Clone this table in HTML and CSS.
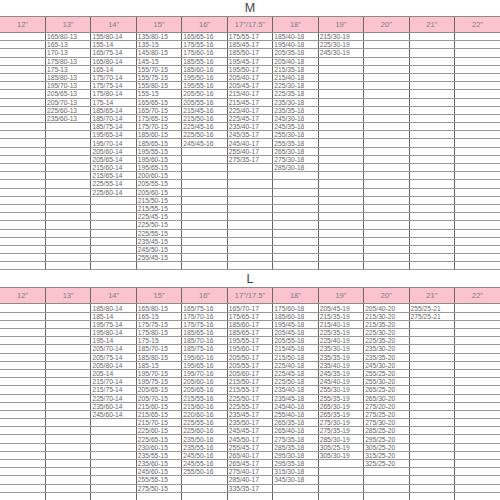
FILE: index.html
```html
<!DOCTYPE html>
<html lang="en">
<head>
<meta charset="utf-8">
<title>Tire sizes</title>
<link rel="stylesheet" href="styles.css">
</head>
<body>
<div class="sheet">
<section class="group">
<div class="title">M</div>
<table class="sizes">
<thead><tr><th>12"</th><th>13"</th><th>14"</th><th>15"</th><th>16"</th><th>17"/17.5"</th><th>18"</th><th>19"</th><th>20"</th><th>21"</th><th>22"</th></tr></thead>
<tbody>
<tr><td></td><td>165/80-13</td><td>155/80-14</td><td>135/80-15</td><td>165/65-16</td><td>175/55-17</td><td>185/40-18</td><td>215/30-19</td><td></td><td></td><td></td></tr>
<tr><td></td><td>165-13</td><td>155-14</td><td>135-15</td><td>175/55-16</td><td>185/45-17</td><td>195/40-18</td><td>225/30-19</td><td></td><td></td><td></td></tr>
<tr><td></td><td>170-13</td><td>165/75-14</td><td>145/80-15</td><td>175/60-16</td><td>185/50-17</td><td>205/35-18</td><td>245/30-19</td><td></td><td></td><td></td></tr>
<tr><td></td><td>175/80-13</td><td>165/80-14</td><td>145-15</td><td>185/55-16</td><td>195/45-17</td><td>205/40-18</td><td></td><td></td><td></td><td></td></tr>
<tr><td></td><td>175-13</td><td>165-14</td><td>155/70-15</td><td>185/60-16</td><td>195/50-17</td><td>215/35-18</td><td></td><td></td><td></td><td></td></tr>
<tr><td></td><td>185/80-13</td><td>175/70-14</td><td>155/75-15</td><td>195/50-16</td><td>205/40-17</td><td>215/40-18</td><td></td><td></td><td></td><td></td></tr>
<tr><td></td><td>195/70-13</td><td>175/75-14</td><td>155/80-15</td><td>195/55-16</td><td>205/45-17</td><td>225/30-18</td><td></td><td></td><td></td><td></td></tr>
<tr><td></td><td>205/65-13</td><td>175/80-14</td><td>155-15</td><td>205/50-16</td><td>215/40-17</td><td>225/35-18</td><td></td><td></td><td></td><td></td></tr>
<tr><td></td><td>205/70-13</td><td>175-14</td><td>165/65-15</td><td>205/55-16</td><td>215/45-17</td><td>235/30-18</td><td></td><td></td><td></td><td></td></tr>
<tr><td></td><td>225/60-13</td><td>185/65-14</td><td>165/70-15</td><td>215/45-16</td><td>225/40-17</td><td>235/35-18</td><td></td><td></td><td></td><td></td></tr>
<tr><td></td><td>235/60-13</td><td>185/70-14</td><td>175/65-15</td><td>215/50-16</td><td>225/45-17</td><td>245/30-18</td><td></td><td></td><td></td><td></td></tr>
<tr><td></td><td></td><td>185/75-14</td><td>175/70-15</td><td>225/45-16</td><td>235/40-17</td><td>245/35-18</td><td></td><td></td><td></td><td></td></tr>
<tr><td></td><td></td><td>195/65-14</td><td>185/60-15</td><td>225/50-16</td><td>245/35-17</td><td>255/30-18</td><td></td><td></td><td></td><td></td></tr>
<tr><td></td><td></td><td>195/70-14</td><td>185/65-15</td><td>245/45-16</td><td>245/40-17</td><td>255/35-18</td><td></td><td></td><td></td><td></td></tr>
<tr><td></td><td></td><td>205/60-14</td><td>195/55-15</td><td></td><td>255/40-17</td><td>265/30-18</td><td></td><td></td><td></td><td></td></tr>
<tr><td></td><td></td><td>205/65-14</td><td>195/60-15</td><td></td><td>275/35-17</td><td>275/30-18</td><td></td><td></td><td></td><td></td></tr>
<tr><td></td><td></td><td>215/60-14</td><td>195/65-15</td><td></td><td></td><td>285/30-18</td><td></td><td></td><td></td><td></td></tr>
<tr><td></td><td></td><td>215/65-14</td><td>200/60-15</td><td></td><td></td><td></td><td></td><td></td><td></td><td></td></tr>
<tr><td></td><td></td><td>225/55-14</td><td>205/55-15</td><td></td><td></td><td></td><td></td><td></td><td></td><td></td></tr>
<tr><td></td><td></td><td>225/60-14</td><td>205/60-15</td><td></td><td></td><td></td><td></td><td></td><td></td><td></td></tr>
<tr><td></td><td></td><td></td><td>215/50-15</td><td></td><td></td><td></td><td></td><td></td><td></td><td></td></tr>
<tr><td></td><td></td><td></td><td>215/55-15</td><td></td><td></td><td></td><td></td><td></td><td></td><td></td></tr>
<tr><td></td><td></td><td></td><td>225/45-15</td><td></td><td></td><td></td><td></td><td></td><td></td><td></td></tr>
<tr><td></td><td></td><td></td><td>225/50-15</td><td></td><td></td><td></td><td></td><td></td><td></td><td></td></tr>
<tr><td></td><td></td><td></td><td>225/55-15</td><td></td><td></td><td></td><td></td><td></td><td></td><td></td></tr>
<tr><td></td><td></td><td></td><td>235/45-15</td><td></td><td></td><td></td><td></td><td></td><td></td><td></td></tr>
<tr><td></td><td></td><td></td><td>245/50-15</td><td></td><td></td><td></td><td></td><td></td><td></td><td></td></tr>
<tr><td></td><td></td><td></td><td>255/45-15</td><td></td><td></td><td></td><td></td><td></td><td></td><td></td></tr>
<tr><td></td><td></td><td></td><td></td><td></td><td></td><td></td><td></td><td></td><td></td><td></td></tr>
</tbody>
</table>
</section>
<section class="group">
<div class="title">L</div>
<table class="sizes">
<thead><tr><th>12"</th><th>13"</th><th>14"</th><th>15"</th><th>16"</th><th>17"/17.5"</th><th>18"</th><th>19"</th><th>20"</th><th>21"</th><th>22"</th></tr></thead>
<tbody>
<tr><td></td><td></td><td>185/80-14</td><td>165/80-15</td><td>165/75-16</td><td>165/70-17</td><td>175/60-18</td><td>205/45-19</td><td>205/40-20</td><td>255/25-21</td><td></td></tr>
<tr><td></td><td></td><td>185-14</td><td>165-15</td><td>175/70-16</td><td>175/65-17</td><td>185/60-18</td><td>215/35-19</td><td>215/30-20</td><td>275/25-21</td><td></td></tr>
<tr><td></td><td></td><td>195/75-14</td><td>175/75-15</td><td>175/75-16</td><td>185/60-17</td><td>195/45-18</td><td>215/40-19</td><td>215/35-20</td><td></td><td></td></tr>
<tr><td></td><td></td><td>195/80-14</td><td>175/80-15</td><td>185/65-16</td><td>185/65-17</td><td>205/45-18</td><td>225/35-19</td><td>225/30-20</td><td></td><td></td></tr>
<tr><td></td><td></td><td>195-14</td><td>175-15</td><td>185/70-16</td><td>195/55-17</td><td>205/55-18</td><td>225/40-19</td><td>225/35-20</td><td></td><td></td></tr>
<tr><td></td><td></td><td>205/70-14</td><td>185/70-15</td><td>185/75-16</td><td>195/60-17</td><td>215/45-18</td><td>235/30-19</td><td>235/30-20</td><td></td><td></td></tr>
<tr><td></td><td></td><td>205/75-14</td><td>185/80-15</td><td>195/60-16</td><td>205/50-17</td><td>215/50-18</td><td>235/35-19</td><td>235/35-20</td><td></td><td></td></tr>
<tr><td></td><td></td><td>205/80-14</td><td>185-15</td><td>195/65-16</td><td>205/55-17</td><td>225/40-18</td><td>235/40-19</td><td>245/30-20</td><td></td><td></td></tr>
<tr><td></td><td></td><td>205-14</td><td>195/70-15</td><td>195/70-16</td><td>205/60-17</td><td>225/45-18</td><td>245/35-19</td><td>255/25-20</td><td></td><td></td></tr>
<tr><td></td><td></td><td>215/70-14</td><td>195/75-15</td><td>205/60-16</td><td>215/50-17</td><td>225/50-18</td><td>245/40-19</td><td>255/30-20</td><td></td><td></td></tr>
<tr><td></td><td></td><td>215/75-14</td><td>205/65-15</td><td>205/65-16</td><td>215/55-17</td><td>235/40-18</td><td>255/30-19</td><td>265/25-20</td><td></td><td></td></tr>
<tr><td></td><td></td><td>225/70-14</td><td>205/70-15</td><td>215/55-16</td><td>225/50-17</td><td>235/45-18</td><td>255/35-19</td><td>265/30-20</td><td></td><td></td></tr>
<tr><td></td><td></td><td>235/60-14</td><td>215/60-15</td><td>215/60-16</td><td>225/55-17</td><td>245/40-18</td><td>265/30-19</td><td>275/20-20</td><td></td><td></td></tr>
<tr><td></td><td></td><td>245/60-14</td><td>215/65-15</td><td>220/60-16</td><td>235/45-17</td><td>255/40-18</td><td>265/35-19</td><td>275/25-20</td><td></td><td></td></tr>
<tr><td></td><td></td><td></td><td>215/70-15</td><td>225/55-16</td><td>235/50-17</td><td>265/35-18</td><td>275/30-19</td><td>275/30-20</td><td></td><td></td></tr>
<tr><td></td><td></td><td></td><td>225/60-15</td><td>225/60-16</td><td>245/45-17</td><td>265/40-18</td><td>275/35-19</td><td>285/25-20</td><td></td><td></td></tr>
<tr><td></td><td></td><td></td><td>225/65-15</td><td>235/50-16</td><td>245/50-17</td><td>275/35-18</td><td>285/30-19</td><td>295/25-20</td><td></td><td></td></tr>
<tr><td></td><td></td><td></td><td>230/60-15</td><td>235/55-16</td><td>255/45-17</td><td>285/35-18</td><td>305/25-19</td><td>305/25-20</td><td></td><td></td></tr>
<tr><td></td><td></td><td></td><td>235/55-15</td><td>245/50-16</td><td>265/40-17</td><td>295/30-18</td><td>305/30-19</td><td>315/25-20</td><td></td><td></td></tr>
<tr><td></td><td></td><td></td><td>235/60-15</td><td>245/55-16</td><td>265/45-17</td><td>295/35-18</td><td></td><td>325/25-20</td><td></td><td></td></tr>
<tr><td></td><td></td><td></td><td>245/60-15</td><td>255/50-16</td><td>275/40-17</td><td>315/30-18</td><td></td><td></td><td></td><td></td></tr>
<tr><td></td><td></td><td></td><td>255/55-15</td><td></td><td>285/40-17</td><td>345/30-18</td><td></td><td></td><td></td><td></td></tr>
<tr><td></td><td></td><td></td><td>275/50-15</td><td></td><td>335/35-17</td><td></td><td></td><td></td><td></td><td></td></tr>
<tr><td></td><td></td><td></td><td></td><td></td><td></td><td></td><td></td><td></td><td></td><td></td></tr>
</tbody>
</table>
</section>
</div>
</body>
</html>
```
FILE: styles.css
```css
html, body {
  margin: 0;
  padding: 0;
  background: #ffffff;
}

body {
  font-family: "Liberation Sans", Arial, sans-serif;
  color: #666666;
}

.sheet {
  width: 500px;
  overflow: hidden;
}

.group + .group {
  margin-top: 1px;
}

.title {
  height: 16px;
  line-height: 16px;
  font-size: 12.5px;
  text-align: center;
  color: #444444;
}

.sizes {
  width: 500px;
  border-collapse: collapse;
  table-layout: fixed;
}

.sizes th {
  height: 15px;
  padding: 0;
  background: #fac3cd;
  font-weight: normal;
  font-size: 7.5px;
  color: #808080;
  text-align: center;
  border-top: 1px solid #8a8a8a;
  border-bottom: 1px solid #8a8a8a;
  border-left: 1px solid #6a6a6a;
}

.sizes tr {
  height: 8.2px;
}

.sizes td {
  padding: 0 0 0 1px;
  font-size: 6.7px;
  line-height: 7px;
  color: #666666;
  white-space: nowrap;
  overflow: hidden;
  border-left: 1px solid #666666;
  border-bottom: 1px solid #999999;
}

.sizes th:first-child,
.sizes td:first-child {
  border-left: none;
}
```
